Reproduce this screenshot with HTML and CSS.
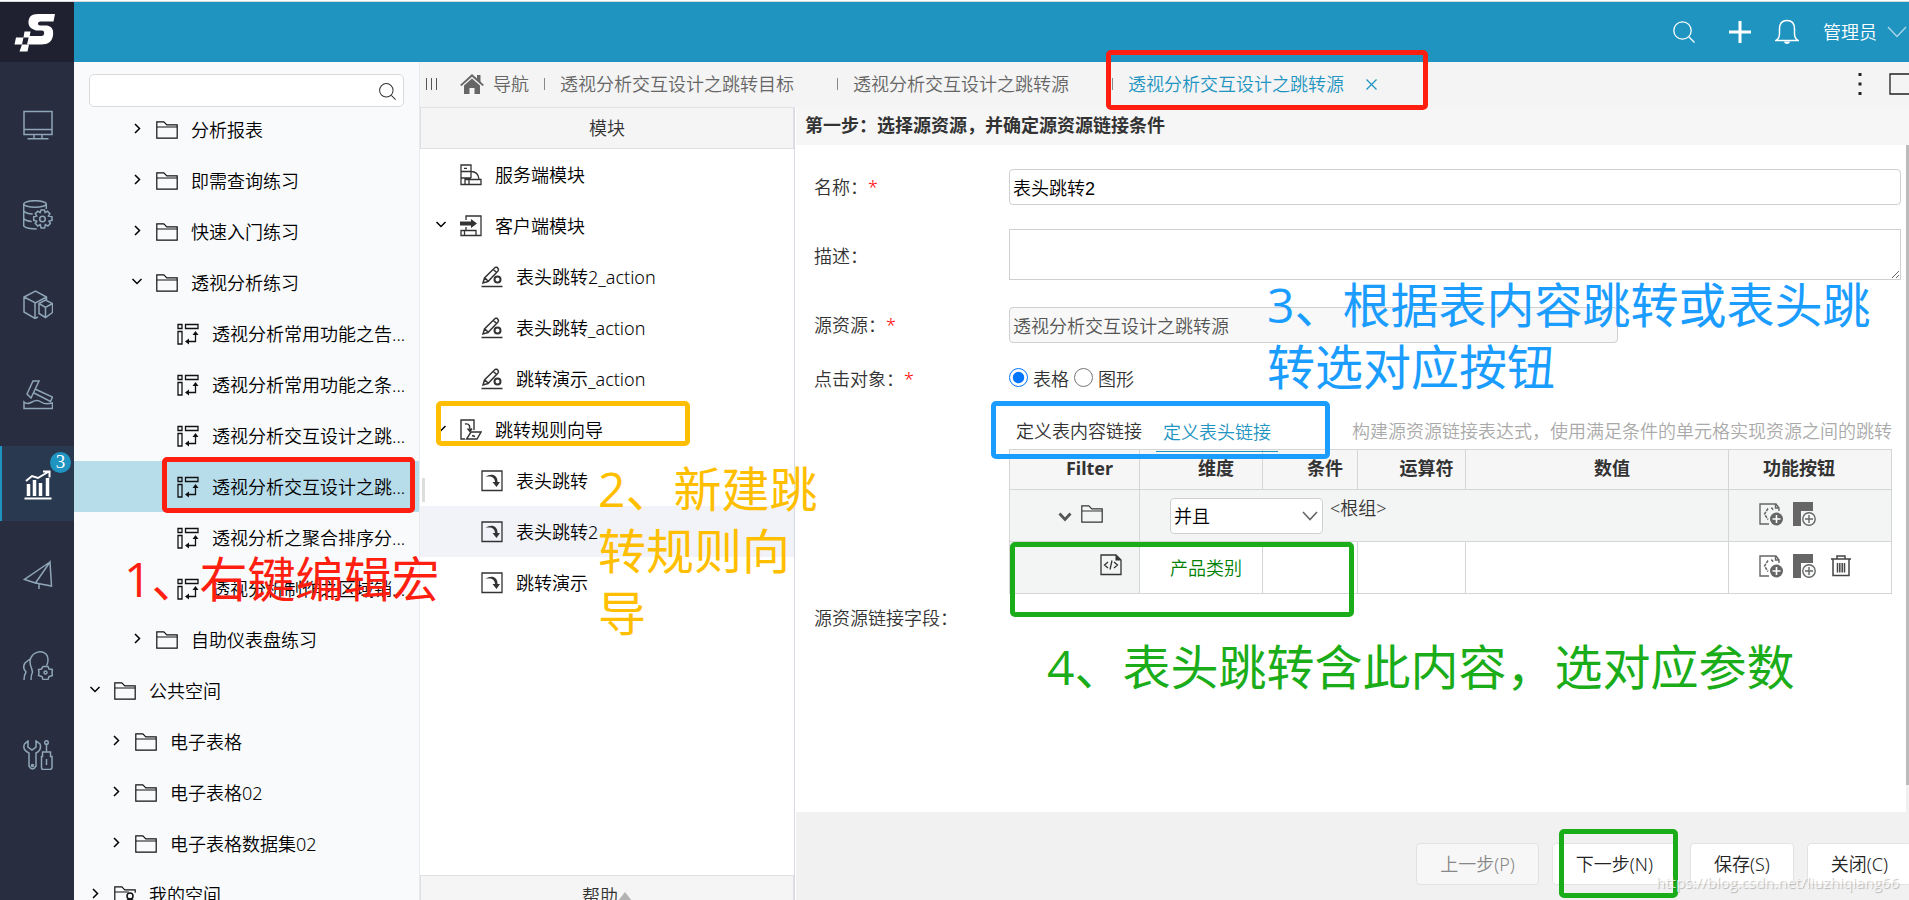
FILE: index.html
```html
<!DOCTYPE html>
<html lang="zh-CN">
<head>
<meta charset="utf-8">
<title>透视分析交互设计之跳转源</title>
<link rel="stylesheet" href="styles.css">
</head>
<body>
<svg class="defs" aria-hidden="true">
  <symbol id="folder" viewBox="0 0 22 18"><path d="M.8.8h7l3 3h10.400v13.400H.8zM.8 6h20.400" fill="none" stroke="currentColor" stroke-width="1.200"/></symbol>
  <symbol id="folder-user" viewBox="0 0 22 18"><path d="M10 17.200H.8V.8h7l3 3h10.400v3M.8 6h14" fill="none" stroke="currentColor" stroke-width="1.200"/><circle cx="16" cy="10" r="3" fill="none" stroke="currentColor" stroke-width="1.500"/><path d="M11 18c0-6 10-6 10 0" fill="none" stroke="currentColor" stroke-width="1.500"/></symbol>
  <symbol id="right" viewBox="0 0 14 14"><path d="M5 3l4.500 4.500L5 12" fill="none" stroke="currentColor" stroke-width="1.500"/></symbol>
  <symbol id="down" viewBox="0 0 14 14"><path d="M2.500 5L7 9.500 11.500 5" fill="none" stroke="currentColor" stroke-width="1.500"/></symbol>
  <symbol id="pivot" viewBox="0 0 22 22"><path d="M1 1.500h4v4H1zM8.500 1.500H21v4H8.500zM1 8.500h4V21H1zM18.500 11v7.500H11" fill="none" stroke="currentColor" stroke-width="1.300"/><path d="M15.500 12l3-4 3 4zM12 15.500l-4 3 4 3z" fill="currentColor"/></symbol>
  <symbol id="server" viewBox="0 0 22 22"><path d="M5 20.500H1V1h10v13M1 7.500h10M1 14h10M11 7.500c5 0 7.500 3.500 8 7.500M5 15.500h16v5H5zM9 15.500v5M4 4.300h3" fill="none" stroke="currentColor" stroke-width="1.300"/></symbol>
  <symbol id="client" viewBox="0 0 22 22"><path d="M6 5V1h15v19.500H1v-5h5M6 12v3.500h10v5M4.500 15.500v5" fill="none" stroke="currentColor" stroke-width="1.300"/><path d="M0 6.500h11V4l6 4.500-6 4.500v-2.500H0z" fill="currentColor"/></symbol>
  <symbol id="pencil" viewBox="0 0 22 22"><path d="M2 17l1.500-5L14 1.500q2-1 3 1Q18 4 17 5L7 15.500zM4 12l3 3M12.500 3.500l3 3" fill="none" stroke="currentColor" stroke-width="1.500"/><circle cx="16.500" cy="13.500" r="3" fill="none" stroke="currentColor" stroke-width="2"/><path d="M.5 20.500h21" stroke="currentColor" stroke-width="1.500"/></symbol>
  <symbol id="wizard" viewBox="0 0 22 22"><path d="M5 20H1V1h13v10M5 5c5-1 5 3 5 7M7.500 9.500l2.500 3 2-3" fill="none" stroke="currentColor" stroke-width="1.400"/><path d="M11 13h10l-4 7H6.500zM12 16.500l3 1" fill="none" stroke="currentColor" stroke-width="1.400"/></symbol>
  <symbol id="jump" viewBox="0 0 22 22"><path d="M1 1h20v19.500H1z" fill="none" stroke="currentColor" stroke-width="1.300"/><path d="M4.500 7C10 2.500 17 5 16.500 12H19l-3.500 5-4-5h2.500C14 7.500 10 5.500 4.500 7z" fill="currentColor"/></symbol>
  <symbol id="search" viewBox="0 0 22 22"><circle cx="9.500" cy="9.500" r="8.700" fill="none" stroke="currentColor" stroke-width="1.300"/><path d="M16 16l5.500 5.500" stroke="currentColor" stroke-width="1.300"/></symbol>
  <symbol id="addexpr" viewBox="0 0 24 24"><path d="M10 22H1V2h16l3 4v3M16.500 2v4h4" fill="none" stroke="currentColor" stroke-width="1.400"/><path d="M9 6.500L5.500 12 9 17.500M12 6q2 0 2 3" fill="none" stroke="currentColor" stroke-width="1.500" stroke-dasharray="3 1"/><circle cx="17.500" cy="17" r="6.500" fill="currentColor"/><path d="M13.500 17h8M17.500 13v8" stroke="#fff" stroke-width="1.600"/></symbol>
  <symbol id="addgroup" viewBox="0 0 24 24"><path d="M0 0h20v9H8v15H0z" fill="currentColor"/><circle cx="16" cy="17" r="6.200" fill="#f6f7f7" stroke="currentColor" stroke-width="1.400"/><path d="M12 17h8M16 13v8" stroke="currentColor" stroke-width="1.400"/></symbol>
  <symbol id="trash" viewBox="0 0 20 22"><path d="M0 4h20M6 4V1h8v3M2 4.500v16h16v-16M6.500 8v9.500M8.800 8v9.500M11.200 8v9.500M13.500 8v9.500" fill="none" stroke="currentColor" stroke-width="1.500"/></symbol>
  <symbol id="code" viewBox="0 0 22 22"><path d="M1 1h15l5 5v14.500H1zM8 8l-3.500 3L8 14M14 8l3.500 3-3.500 3M12 6.500l-2 9" fill="none" stroke="currentColor" stroke-width="1.300"/><path d="M15.500 1l5.500 5.500h-5.500z" fill="currentColor"/></symbol>
</svg>

<header class="topbar">
  <a class="logo" href="#" aria-label="首页"><svg width="42" height="40" viewBox="0 0 42 40"><path d="M41 1H24c-7 0-9 3-9.500 7.500S17 16 22 17.500h6c3 0 3 5.500-.5 5.500H15l-2 8.500h14c7.500 0 11-3 12-9 .8-6-1-9-6-10h-7c-3-.5-2.500-4 .5-4h13z" fill="#fff"/><path d="M10.500 18.500h6l-1 6h-6zM2 24.500h7.500l-1.500 7H.5zM8 31.500h7l-1.500 7h-8z" fill="#fff"/></svg></a>
  <div class="actions">
    <button class="act act-search" aria-label="搜索"><svg width="22" height="22"><use href="#search"/></svg></button>
    <button class="act" aria-label="新建"><svg width="22" height="22" viewBox="0 0 22 22"><path d="M0 11h22M11 0v22" stroke="currentColor" stroke-width="3"/></svg></button>
    <button class="act" aria-label="通知"><svg width="24" height="26" viewBox="0 0 24 26"><path d="M1 21.500q3.500-2 3.500-7V10C4.500 5 7 1.500 12 1.500S19.500 5 19.500 10v4.500q0 5 3.500 7z" fill="none" stroke="currentColor" stroke-width="1.500"/><path d="M8.500 22.500q3.500 5 7 0z" fill="currentColor"/></svg></button>
    <button class="act user">管理员<svg width="20" height="12" viewBox="0 0 20 12"><path d="M1 1l9 9.500L19 1" fill="none" stroke="#a5d4e6" stroke-width="1.500"/></svg></button>
  </div>
</header>

<div class="shell">
  <nav class="rail" aria-label="主菜单">
    <a href="#" aria-label="展示"><svg class="ri" viewBox="0 0 30 30"><path d="M1 1.500h28v23H1zM1 19.500h28M11 24.500v4M19 24.500v4M4.500 28.700h21"/></svg></a>
    <a href="#" aria-label="数据源"><svg class="ri" viewBox="0 0 30 30"><ellipse cx="12" cy="4" rx="11.300" ry="3.300"/><path d="M.7 4v22q3 3 13 3M23.300 4v5M.7 11q3 3 9 3M.7 18.500q2 2.500 8 3"/><path d="M18 10h3.500l.6 2.600 2.300-1.400 2.500 2.500-1.400 2.300 3.500.8v3.500l-3 .8 1.400 2.400-2.500 2.500-2.500-1.400-.8 3.400h-3.500l-.8-3.400-2.500 1.400-2.500-2.500 1.400-2.400-3-.8v-3.500l3-.8-1.400-2.300 2.500-2.500 2.300 1.400z"/><circle cx="19.500" cy="19" r="2.800"/></svg></a>
    <a href="#" aria-label="数据准备"><svg class="ri" viewBox="0 0 30 30"><path d="M15 27l-3 1.500L1 22V7l11.500-6 11 6v3M1 7l11.500 6L23.500 7M12 13v15.500M16 13.500l6.500-3.500 7 3.500v9l-7 5-6.500-4zM16 13.500l6.500 4 7-4M22.500 17.500v10"/></svg></a>
    <a href="#" aria-label="数据挖掘"><svg class="ri" viewBox="0 0 30 30"><path d="M10 1h6L8 18l-4-4zM12 9l17.500 8-2 4.500L11 13M1 22q3 3 8 0 5-3 9 0t11.500 1v5.500H1z"/></svg></a>
    <a class="on" href="#" aria-label="分析展现"><svg class="ri" viewBox="0 0 30 30"><path class="w2" d="M3 11l6-5 6 2 10-6M20 1.500h6.500v6M1.500 28.500h27"/><path class="w3" d="M5.500 14v12M11.500 10v16M17.500 13v13M24.500 8v18"/></svg><span class="badge">3</span></a>
    <a href="#" aria-label="发布"><svg class="ri" viewBox="0 0 30 30"><path d="M27 2L1.500 19.500l11 3.500zM27 2l1.500 24L12.500 23zM16 23.500V29"/></svg></a>
    <a href="#" aria-label="用户管理"><svg class="ri" viewBox="0 0 30 30"><path d="M8 30q0-5 1.500-8L8.500 18C1 1 25-4 25 10c0 2-.5 4-1.500 5.500M1 30q0-5 2-8Q-1 18 2 13l5-4"/><path d="M20 16.500h5l1 2.500 3.500.5-.5 3 .5 3-3.500 1-1 3h-5l-1-3-3.500-1L16 22.500l-.5-3 3-.5z"/><circle cx="22.500" cy="22.500" r="1.500"/></svg></a>
    <a href="#" aria-label="系统运维"><svg class="ri" viewBox="0 0 30 30"><path d="M5 1v6l4 3 4-3V1l4 3q2 6-4 9v13q-3.500 6-7 0V13q-7-3-4.500-9z"/><circle cx="9.500" cy="25.500" r="1"/><circle cx="23.500" cy="2.500" r="1.800"/><path d="M23.500 4.500V12M19.500 12h8v4.500H29v11q-.5 2-2 2h-7q-1.500 0-1.500-2v-11h1zM23.500 19v6"/></svg></a>
  </nav>

  <aside class="side">
    <div class="find"><input type="search" aria-label="搜索资源"><button aria-label="查找"><svg width="17" height="17"><use href="#search"/></svg></button></div>
    <ul class="tree">
      <li><a class="row l3" href="#"><svg class="ar"><use href="#right"/></svg><svg class="ic fo"><use href="#folder"/></svg>分析报表</a></li>
      <li><a class="row l3" href="#"><svg class="ar"><use href="#right"/></svg><svg class="ic fo"><use href="#folder"/></svg>即需查询练习</a></li>
      <li><a class="row l3" href="#"><svg class="ar"><use href="#right"/></svg><svg class="ic fo"><use href="#folder"/></svg>快速入门练习</a></li>
      <li><a class="row l3" href="#"><svg class="ar"><use href="#down"/></svg><svg class="ic fo"><use href="#folder"/></svg>透视分析练习</a></li>
      <li><a class="row l4" href="#"><svg class="ar"></svg><svg class="ic"><use href="#pivot"/></svg>透视分析常用功能之告...</a></li>
      <li><a class="row l4" href="#"><svg class="ar"></svg><svg class="ic"><use href="#pivot"/></svg>透视分析常用功能之条...</a></li>
      <li><a class="row l4" href="#"><svg class="ar"></svg><svg class="ic"><use href="#pivot"/></svg>透视分析交互设计之跳...</a></li>
      <li><a class="row l4 picked" href="#"><svg class="ar"></svg><svg class="ic"><use href="#pivot"/></svg>透视分析交互设计之跳...</a></li>
      <li><a class="row l4" href="#"><svg class="ar"></svg><svg class="ic"><use href="#pivot"/></svg>透视分析之聚合排序分...</a></li>
      <li><a class="row l4" href="#"><svg class="ar"></svg><svg class="ic"><use href="#pivot"/></svg>透视分析制作之区域销...</a></li>
      <li><a class="row l3" href="#"><svg class="ar"><use href="#right"/></svg><svg class="ic fo"><use href="#folder"/></svg>自助仪表盘练习</a></li>
      <li><a class="row l1" href="#"><svg class="ar"><use href="#down"/></svg><svg class="ic fo"><use href="#folder"/></svg>公共空间</a></li>
      <li><a class="row l2" href="#"><svg class="ar"><use href="#right"/></svg><svg class="ic fo"><use href="#folder"/></svg>电子表格</a></li>
      <li><a class="row l2" href="#"><svg class="ar"><use href="#right"/></svg><svg class="ic fo"><use href="#folder"/></svg>电子表格02</a></li>
      <li><a class="row l2" href="#"><svg class="ar"><use href="#right"/></svg><svg class="ic fo"><use href="#folder"/></svg>电子表格数据集02</a></li>
      <li><a class="row l1" href="#"><svg class="ar"><use href="#right"/></svg><svg class="ic fo"><use href="#folder-user"/></svg>我的空间</a></li>
    </ul>
  </aside>

  <main class="main">
    <div class="tabs">
      <button class="bars" aria-label="收起"><svg width="11" height="12" viewBox="0 0 11 12"><path d="M.5 0v12M5.500 0v12M10.500 0v12" stroke="#555"/></svg></button>
      <a class="home" href="#"><svg width="24" height="20" viewBox="0 0 24 20"><path d="M12 0l5 4.500V1h3.500v6.500L24 11l-1.500 1L12 2.700 1.500 12 0 11z" fill="#666"/><path d="M12 4.500l8 7V20h-5.500v-6h-5v6H4v-8.500z" fill="#666"/></svg>导航</a>
      <a class="tab" href="#">透视分析交互设计之跳转目标</a>
      <a class="tab" href="#">透视分析交互设计之跳转源</a>
      <a class="tab cur" href="#">透视分析交互设计之跳转源<svg class="x" width="11" height="11" viewBox="0 0 11 11"><path d="M.5.5l10 10M10.500.5l-10 10" stroke="currentColor" stroke-width="1.300"/></svg></a>
      <div class="tools">
        <button aria-label="更多"><svg width="4" height="22" viewBox="0 0 4 22"><path d="M.5 0h3v3h-3zM.5 9.500h3v3h-3zM.5 19h3v3h-3z" fill="#222"/></svg></button>
        <button aria-label="最大化"><svg width="22" height="22" viewBox="0 0 22 22"><path d="M1 1h20v20H1z" fill="none" stroke="#222" stroke-width="1.300"/></svg></button>
      </div>
    </div>

    <div class="work">
      <section class="modules">
        <h2 class="bar">模块</h2>
        <ul class="modlist">
          <li><a class="row l1" href="#"><svg class="ar"></svg><svg class="ic"><use href="#server"/></svg>服务端模块</a></li>
          <li><a class="row l1" href="#"><svg class="ar"><use href="#down"/></svg><svg class="ic"><use href="#client"/></svg>客户端模块</a></li>
          <li><a class="row l2" href="#"><svg class="ar"></svg><svg class="ic"><use href="#pencil"/></svg>表头跳转2_action</a></li>
          <li><a class="row l2" href="#"><svg class="ar"></svg><svg class="ic"><use href="#pencil"/></svg>表头跳转_action</a></li>
          <li><a class="row l2" href="#"><svg class="ar"></svg><svg class="ic"><use href="#pencil"/></svg>跳转演示_action</a></li>
          <li><a class="row l1" href="#"><svg class="ar"><use href="#down"/></svg><svg class="ic"><use href="#wizard"/></svg>跳转规则向导</a></li>
          <li><a class="row l2" href="#"><svg class="ar"></svg><svg class="ic"><use href="#jump"/></svg>表头跳转</a></li>
          <li><a class="row l2 soft" href="#"><svg class="ar"></svg><svg class="ic"><use href="#jump"/></svg>表头跳转2</a></li>
          <li><a class="row l2" href="#"><svg class="ar"></svg><svg class="ic"><use href="#jump"/></svg>跳转演示</a></li>
        </ul>
        <button class="bar help">帮助<svg width="14" height="9" viewBox="0 0 14 9"><path d="M7 0l7 9H0z" fill="#b3b3b3"/></svg></button>
        <span class="grip"></span>
      </section>

      <form class="wizard">
        <h2 class="step">第一步：选择源资源，并确定源资源链接条件</h2>
        <div class="scroll">
          <div class="fields">
            <label for="name">名称：<i>*</i></label>
            <input id="name" class="box" type="text" value="表头跳转2">
            <label for="desc">描述：</label>
            <textarea id="desc" class="box area"></textarea>
            <label for="src">源资源：<i>*</i></label>
            <input id="src" class="box short" type="text" value="透视分析交互设计之跳转源" readonly>
            <span class="lab">点击对象：<i>*</i></span>
            <div class="radios">
              <label><input type="radio" name="obj" checked>表格</label>
              <label><input type="radio" name="obj">图形</label>
            </div>
            <span class="lab linklab">源资源链接字段：</span>
            <div class="link">
              <div class="linktabs">
                <a href="#">定义表内容链接</a>
                <a class="cur" href="#">定义表头链接</a>
                <span class="hint">构建源资源链接表达式，使用满足条件的单元格实现资源之间的跳转</span>
              </div>
              <table class="grid">
                <colgroup><col class="c1"><col class="c2"><col class="c3"><col class="c4"><col><col class="c6"></colgroup>
                <thead><tr><th>Filter</th><th>维度</th><th>条件</th><th>运算符</th><th>数值</th><th class="fn">功能按钮</th></tr></thead>
                <tbody>
                  <tr class="group">
                    <td><div class="cell fcell"><svg class="fold" width="14" height="10" viewBox="0 0 14 10"><path d="M1.500 1.500L7 7.500l5.500-6" fill="none" stroke="#555" stroke-width="2.800"/></svg><svg width="22" height="18"><use href="#folder"/></svg></div></td>
                    <td colspan="4"><div class="cell gcell"><span class="pick"><select aria-label="组合方式"><option>并且</option></select><svg width="16" height="10" viewBox="0 0 16 10"><path d="M1 1l7 7.500L15 1" fill="none" stroke="#666" stroke-width="1.600"/></svg></span><span class="root">&lt;根组&gt;</span></div></td>
                    <td><div class="cell ops"><button type="button" aria-label="添加条件"><svg width="24" height="24"><use href="#addexpr"/></svg></button><button type="button" aria-label="添加组"><svg width="24" height="24"><use href="#addgroup"/></svg></button></div></td>
                  </tr>
                  <tr>
                    <td class="tint"><div class="cell icell"><svg width="22" height="22"><use href="#code"/></svg></div></td>
                    <td class="dim">产品类别</td><td></td><td></td><td></td>
                    <td><div class="cell ops"><button type="button" aria-label="添加条件"><svg width="24" height="24"><use href="#addexpr"/></svg></button><button type="button" aria-label="添加组"><svg width="24" height="24"><use href="#addgroup"/></svg></button><button type="button" class="del" aria-label="删除"><svg width="20" height="22"><use href="#trash"/></svg></button></div></td>
                  </tr>
                </tbody>
              </table>
            </div>
          </div>
          <div class="track"><span class="thumb"></span></div>
        </div>
        <footer class="foot">
          <button type="button" class="btn" disabled>上一步(P)</button>
          <button type="button" class="btn">下一步(N)</button>
          <button type="button" class="btn">保存(S)</button>
          <button type="button" class="btn">关闭(C)</button>
        </footer>
      </form>
    </div>
  </main>
</div>

<div class="mark red m-tree"></div>
<div class="mark red m-tab"></div>
<div class="mark amber m-rule"></div>
<div class="mark blue m-link"></div>
<div class="mark green m-row"></div>
<div class="mark green m-next"></div>
<p class="note red n1">1、右键编辑宏</p>
<p class="note amber n2">2、新建跳<br>转规则向<br>导</p>
<p class="note blue n3">3、根据表内容跳转或表头跳<br>转选对应按钮</p>
<p class="note green n4">4、表头跳转含此内容，选对应参数</p>
<p class="credit">https://blog.csdn.net/liuzhiqiang66</p>
</body>
</html>
```

FILE: styles.css
```css
* { box-sizing: border-box; }
html, body { height: 100%; }
body {
  margin: 0;
  position: relative;
  display: flex;
  flex-direction: column;
  overflow: hidden;
  border-top: 1px solid #fff;
  background: #fff;
  color: #333;
  font: 350 18px/24px "Noto Sans", "Noto Sans CJK SC", sans-serif;
}
a { color: inherit; text-decoration: none; }
ul { list-style: none; margin: 0; padding: 0; }
h2, p { margin: 0; }
button { border: 0; padding: 0; background: none; color: inherit; font: inherit; }
svg { display: block; flex: none; }
.defs { position: absolute; width: 0; height: 0; }

/* top bar */
.topbar { display: flex; flex: none; height: 61px; border-top: 1px solid #d5dadd; background: #1f94c1; }
.logo { width: 74px; background: #1f2131; padding: 11px 0 0 14px; }
.actions { flex: 1; display: flex; align-items: center; justify-content: flex-end; gap: 24px; padding: 0 2px 0 0; color: #fff; }
.act { display: flex; align-items: center; gap: 10px; }
.act-search { margin-right: 10px; }

/* icon rail */
.shell { flex: 1; min-height: 0; display: flex; }
.rail { width: 74px; flex: none; background: #282d3f; padding-top: 24px; display: flex; flex-direction: column; gap: 15px; color: #8fa5b8; }
.rail a { position: relative; flex: none; height: 75px; padding: 24px 0 0 21px; border-left: 2px solid transparent; }
.ri { width: 30px; height: 30px; fill: none; stroke: currentColor; stroke-width: 1.5px; }
.w2 { stroke-width: 2px; }
.w3 { stroke-width: 3.5px; }
.rail .on { background: #293a50; border-color: #1f94c1; color: #fff; }
.badge { position: absolute; top: 6px; right: 3px; width: 21px; height: 21px; border-radius: 50%; background: #1f94c1; color: #fff; font: 19px/20px "Liberation Serif", serif; text-align: center; }

/* resource tree */
.side { width: 346px; flex: none; background: #f9fafc; border-right: 1px solid #e8eaee; overflow: hidden; }
.find { position: relative; z-index: 1; height: 45px; padding: 12px 15px 0; display: flex; }
.find input { width: 100%; height: 33px; border: 1px solid #d9dadb; border-radius: 5px; background: #fff; padding: 0 32px 0 8px; font: inherit; }
.find button { position: absolute; right: 23px; top: 21px; }
.tree { margin-top: -3px; }
.row { display: flex; align-items: center; height: 51px; color: #000; white-space: nowrap; }
.ar { width: 14px; height: 14px; margin: 0 12px 4px 0; }
.ic { width: 22px; height: 22px; margin-right: 13px; color: #333; }
.fo { height: 18px; color: #111; }
.tree .ic { color: #111; }
.l1 { padding-left: 14px; }
.l2 { padding-left: 35px; }
.l3 { padding-left: 56px; }
.l4 { padding-left: 77px; }
.picked { background: #b7dcea; }
.soft { background: #f2f3f8; }

/* tabs */
.main { flex: 1; min-width: 0; display: flex; flex-direction: column; }
.tabs { flex: none; height: 45px; background: #f4f4f4; display: flex; align-items: center; padding: 0 0 1px 6px; color: #666; white-space: nowrap; overflow: hidden; }
.bars { margin-right: 23px; }
.home { display: flex; align-items: center; gap: 9px; margin-right: 15px; }
.tab { position: relative; display: flex; align-items: center; padding: 0 43px 0 16px; }
.tab::before { content: ""; position: absolute; left: 0; top: 6px; width: 1px; height: 12px; background: #888; }
.tab.cur { color: #1f94c1; padding-right: 0; }
.x { margin-left: 22px; }
.tools { margin: 0 -2px 0 auto; display: flex; align-items: center; gap: 27px; }

/* module list */
.work { flex: 1; min-height: 0; display: flex; overflow: hidden; }
.modules { position: relative; width: 375px; flex: none; display: flex; flex-direction: column; border-right: 1px solid #d8dae3; background: #fff; }
.bar { flex: none; height: 42px; border: 1px solid #e0e1e5; background: #f5f5f5; display: flex; align-items: center; justify-content: center; font: inherit; }
.modlist { flex: 1; min-height: 0; }
.help { margin-bottom: -17px; width: 100%; }
.grip { position: absolute; left: 2px; top: 371px; width: 3px; height: 24px; background: #ddd; }

/* wizard form */
.wizard { flex: 1; min-width: 0; margin-left: 1px; display: flex; flex-direction: column; }
.step { flex: none; height: 38px; background: #f6f6f6; padding-left: 9px; font-size: 18px; line-height: 36px; font-weight: 700; }
.scroll { flex: 1; min-height: 0; display: flex; overflow: hidden; }
.track { width: 3px; flex: none; background: #f0f0f0; }
.thumb { display: block; height: 96%; background: #bbb; }
.fields { flex: 1; min-width: 0; display: grid; grid-template-columns: 195px minmax(0, 1fr); grid-template-rows: 36px 54px 36px 24px 406px; row-gap: 24px; align-items: center; padding: 24px 5px 0 18px; }
.fields i { color: #f00; font-style: normal; }
.box { width: 100%; height: 36px; border: 1px solid #d0d0d0; border-radius: 4px; padding: 0 3px; background: #fff; color: #000; font: 350 18px/24px "Liberation Sans", "Noto Sans CJK SC", sans-serif; }
.area { align-self: start; height: 51px; border-radius: 0; display: block; resize: vertical; }
.short { width: 609px; max-width: 100%; background: #f8f8f8; color: #555; }
.radios, .radios label { display: flex; align-items: center; gap: 5px; }
.radios input { width: 19px; height: 19px; margin: 0 0 4px; }
.link { align-self: start; margin-right: 9px; }
.linktabs { display: flex; align-items: flex-end; height: 34px; padding: 0 0 6px 7px; white-space: nowrap; }
.linktabs a { height: 24px; margin-right: 14px; }
.linktabs .cur { position: relative; height: 32px; margin-bottom: -9px; padding: 0 7px; color: #1f94c1; border-bottom: 1px solid #1f94c1; }
.hint { margin-left: auto; color: #aaa; }
.grid { width: 100%; table-layout: fixed; border-collapse: collapse; }
.c1 { width: 130px; }
.c2 { width: 123px; }
.c3 { width: 95px; }
.c4 { width: 108px; }
.c6 { width: 163px; }
.grid th, .grid td { border: 1px solid #d4d5d5; height: 52px; padding: 0; text-align: left; }
.grid th { height: 40px; background: #f6f6f6; padding: 0 0 4px 30px; text-align: center; font-weight: 700; }
.grid .fn { padding: 0 22px 4px 0; }
.group, .tint { background: #f3f5f5; }
.cell { display: flex; align-items: center; }
.fcell { padding: 0 0 4px 48px; gap: 9px; }
.fold { margin-top: 6px; }
.icell { justify-content: flex-end; padding: 0 17px 6px 0; }
.gcell { padding-left: 30px; gap: 7px; }
.pick { position: relative; width: 153px; height: 36px; }
.pick select { width: 100%; height: 36px; appearance: none; border: 1px solid #d0d0d0; border-radius: 4px; background: #fff; padding: 0 3px; color: #000; font: inherit; }
.pick svg { position: absolute; right: 5px; top: 13px; pointer-events: none; }
.root { margin-bottom: 16px; }
.grid .dim { padding-left: 30px; color: #008000; }
.ops { padding: 0 0 4px 30px; gap: 10px; color: #666; }
.del { margin-left: 4px; color: #444; }

/* footer */
.foot { flex: none; height: 88px; background: #f1f1f1; display: flex; justify-content: flex-end; align-items: flex-start; gap: 13px; padding-top: 31px; }
.btn { height: 42px; flex: none; padding: 0 23px; border: 1px solid #e2e2e2; border-radius: 4px; background: #fff; color: #222; }
.btn:disabled { background: #f7f7f7; color: #888; }
.btn:last-child { margin-right: -3px; }

/* annotations drawn over the page */
.mark { position: absolute; border: 5px solid; border-radius: 5px; pointer-events: none; }
.note { position: absolute; font: 400 48px/62px "Open Sans", "Noto Sans CJK SC", sans-serif; white-space: nowrap; pointer-events: none; }
.red { color: #ff1f10; }
.amber { color: #ffbf00; }
.blue { color: #1a9dff; }
.green { color: #1aad19; }
.m-tree { left: 162px; top: 456px; width: 253px; height: 56px; }
.m-tab { left: 1106px; top: 49px; width: 322px; height: 60px; }
.m-rule { left: 436px; top: 400px; width: 254px; height: 45px; }
.m-link { left: 991px; top: 400px; width: 339px; height: 58px; }
.m-row { left: 1010px; top: 541px; width: 344px; height: 75px; }
.m-next { left: 1559px; top: 828px; width: 119px; height: 69px; }
.n1 { left: 124px; top: 547px; }
.n2 { left: 598px; top: 457px; }
.n3 { left: 1267px; top: 273px; }
.n4 { left: 1047px; top: 635px; }
.credit { position: absolute; right: 10px; bottom: 6px; font: 400 15px/24px "Open Sans", sans-serif; color: rgba(255, 255, 255, .75); text-shadow: 1px 1px 1px rgba(0, 0, 0, .25); pointer-events: none; }
```
